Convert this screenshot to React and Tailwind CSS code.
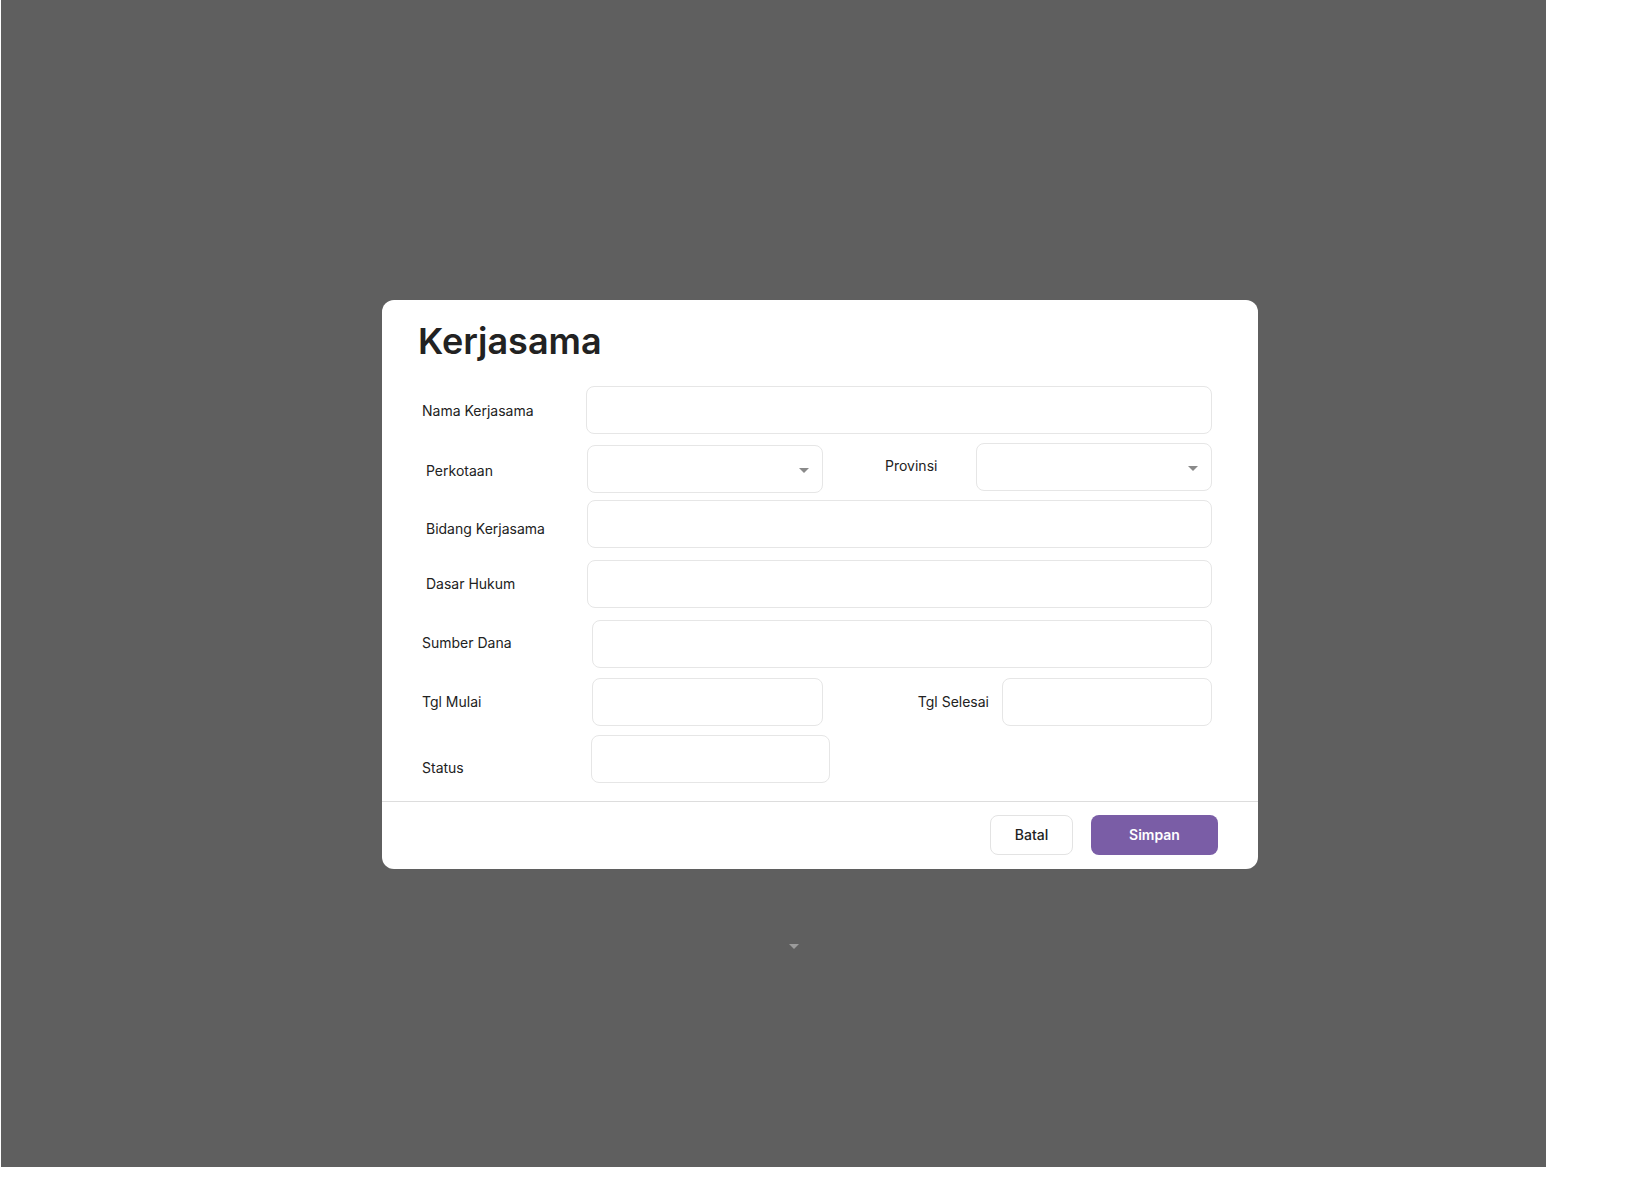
const font = { fontFamily: "Inter, 'Noto Sans', sans-serif" };

function Field({ className = "" }) {
  return <div className={`h-12 rounded-lg border border-[#e6e6e6] bg-white ${className}`} />;
}

function Select({ className = "" }) {
  return (
    <div className={`h-12 rounded-lg border border-[#e6e6e6] bg-white flex items-center justify-end pr-[13px] ${className}`}>
      <span className="w-0 h-0 mt-[3px] border-x-[5px] border-x-transparent border-t-[5px] border-t-[#8a8a8a]" />
    </div>
  );
}

function Label({ children, className = "" }) {
  return <div className={`shrink-0 text-sm text-[#222] ${className}`}>{children}</div>;
}

export default function App() {
  return (
    <div className="w-[1626px] h-[1190px] bg-white pl-px" style={font}>
      <div className="w-[1545px] h-[1167px] bg-[#5f5f5f] pt-[300px] pl-[381px]">
        <div className="w-[876px] rounded-xl bg-white">
          <h1 className="pt-[21px] pl-[36px] text-4xl leading-10 font-semibold text-[#222]">Kerjasama</h1>

          <div className="pl-[40px] pr-[46px]">
            <div className="flex items-center mt-[25px]">
              <Label className="w-[164px] pt-[2px]">Nama Kerjasama</Label>
              <Field className="flex-1" />
            </div>

            <div className="flex items-start mt-[9px]">
              <div className="flex items-center mt-[2px]">
                <Label className="w-[165px] pl-1 pt-1">Perkotaan</Label>
                <Select className="w-[236px]" />
              </div>
              <div className="flex items-center flex-1">
                <Label className="ml-[62px] w-[91px] pb-[2px]">Provinsi</Label>
                <Select className="flex-1" />
              </div>
            </div>

            <div className="flex items-center mt-[7px]">
              <Label className="w-[165px] pl-1 pt-[10px]">Bidang Kerjasama</Label>
              <Field className="flex-1" />
            </div>

            <div className="flex items-center mt-3">
              <Label className="w-[165px] pl-1">Dasar Hukum</Label>
              <Field className="flex-1" />
            </div>

            <div className="flex items-center mt-3">
              <Label className="w-[170px] pb-[2px]">Sumber Dana</Label>
              <Field className="flex-1" />
            </div>

            <div className="flex items-center mt-[10px]">
              <Label className="w-[170px]">Tgl Mulai</Label>
              <Field className="w-[231px]" />
              <div className="flex-1 flex items-center justify-end">
                <Label className="mr-[13px]">Tgl Selesai</Label>
                <Field className="w-[210px]" />
              </div>
            </div>

            <div className="flex items-center mt-[9px]">
              <Label className="w-[169px] pt-[18px]">Status</Label>
              <Field className="w-[239px]" />
            </div>
          </div>

          <div className="mt-[18px] border-t border-[#dddddd] flex justify-end gap-[18px] pt-[13px] pb-[14px] pr-[40px]">
            <button className="h-10 w-[83px] rounded-lg border border-[#e3e3e3] bg-white text-sm font-medium text-[#222]">
              Batal
            </button>
            <button className="h-10 w-[127px] rounded-lg bg-[#7a5da6] text-sm font-semibold text-white">
              Simpan
            </button>
          </div>
        </div>

        <div className="mt-[75px] ml-[407px] w-0 h-0 border-x-[5px] border-x-transparent border-t-[5px] border-t-[#9b9b9b]" />
      </div>
    </div>
  );
}
